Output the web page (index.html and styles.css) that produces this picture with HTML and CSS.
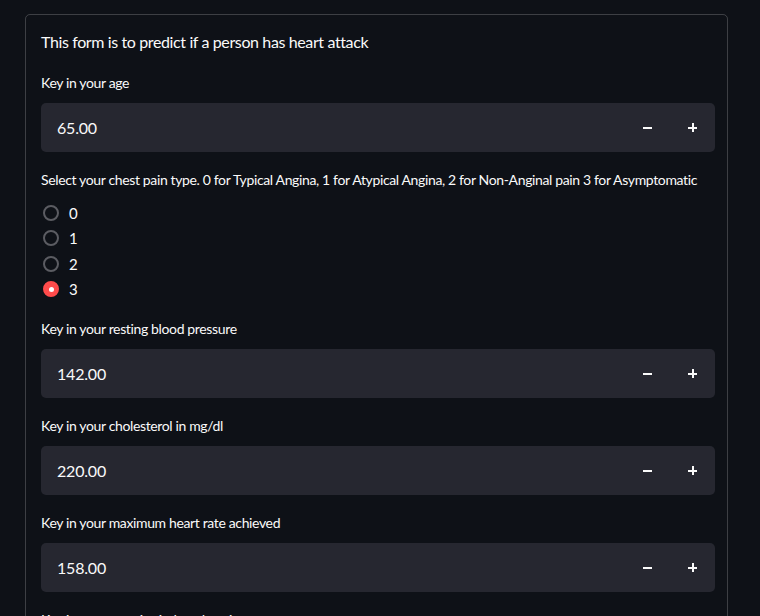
FILE: index.html
```html
<!DOCTYPE html>
<html>
<head>
<meta charset="utf-8">
<link rel="stylesheet" href="styles.css">
</head>
<body>
<div class="page">
  <form class="form">
    <p class="title">This form is to predict if a person has heart attack</p>

    <div class="field">
      <label class="label">Key in your age</label>
      <div class="num">
        <span class="num-value">65.00</span>
        <span class="step"><span class="minus"></span></span>
        <span class="step"><span class="plus"></span></span>
      </div>
    </div>

    <div class="field">
      <label class="label">Select your chest pain type. 0 for Typical Angina, 1 for Atypical Angina, 2 for Non-Anginal pain 3 for Asymptomatic</label>
      <div class="radios">
        <div class="radio"><span class="dot"></span><span>0</span></div>
        <div class="radio"><span class="dot"></span><span>1</span></div>
        <div class="radio"><span class="dot"></span><span>2</span></div>
        <div class="radio"><span class="dot on"></span><span>3</span></div>
      </div>
    </div>

    <div class="field">
      <label class="label">Key in your resting blood pressure</label>
      <div class="num">
        <span class="num-value">142.00</span>
        <span class="step"><span class="minus"></span></span>
        <span class="step"><span class="plus"></span></span>
      </div>
    </div>

    <div class="field">
      <label class="label">Key in your cholesterol in mg/dl</label>
      <div class="num">
        <span class="num-value">220.00</span>
        <span class="step"><span class="minus"></span></span>
        <span class="step"><span class="plus"></span></span>
      </div>
    </div>

    <div class="field">
      <label class="label">Key in your maximum heart rate achieved</label>
      <div class="num">
        <span class="num-value">158.00</span>
        <span class="step"><span class="minus"></span></span>
        <span class="step"><span class="plus"></span></span>
      </div>
    </div>

    <div class="field">
      <label class="label">Key in your exercise induced angina</label>
    </div>
  </form>
</div>
</body>
</html>
```

FILE: styles.css
```css
html, body {
  margin: 0;
  padding: 0;
  background: #0e1117;
  height: 100%;
  overflow: hidden;
}
body {
  font-family: Lato, "Open Sans", sans-serif;
  color: #fafafa;
}
.page {
  padding: 14px 32px 0 25px;
}
.form {
  border: 1px solid rgba(250, 250, 250, 0.2);
  border-radius: 5px;
  padding: 15px 12px 40px 15px;
  display: flex;
  flex-direction: column;
}
.title {
  margin: 0 0 19px 0;
  font-size: 16px;
  line-height: 24px;
  height: 24px;
  letter-spacing: -0.38px;
}
.field {
  display: flex;
  flex-direction: column;
  margin-bottom: 18px;
}
.label {
  font-size: 14px;
  line-height: 20px;
  margin-bottom: 10px;
  letter-spacing: -0.36px;
  white-space: nowrap;
}
.num {
  display: flex;
  align-items: center;
  height: 49px;
  background: #262730;
  border-radius: 5px;
}
.num-value {
  flex: 1;
  padding-left: 16px;
  font-size: 16px;
  letter-spacing: -0.2px;
}
.step {
  width: 45px;
  height: 49px;
  display: flex;
  align-items: center;
  justify-content: center;
}
.minus, .plus {
  display: block;
  width: 9px;
  height: 9px;
  position: relative;
}
.minus::before, .plus::before, .plus::after {
  content: "";
  position: absolute;
  background: #fafafa;
}
.minus::before, .plus::before {
  left: 0;
  top: 3.5px;
  width: 9px;
  height: 2.5px;
}
.plus::after {
  left: 3.5px;
  top: 0;
  width: 2.5px;
  height: 9px;
}
.radios {
  display: flex;
  flex-direction: column;
  margin-bottom: -1px;
}
.radio {
  display: flex;
  align-items: center;
  height: 25.5px;
  font-size: 15px;
}
.dot {
  box-sizing: border-box;
  width: 16px;
  height: 16px;
  border-radius: 50%;
  border: 2px solid #5b5c62;
  margin: 0 10px 0 2px;
  position: relative;
}
.dot.on {
  background: #ff4b4b;
  border-color: #ff4b4b;
}
.dot.on::after {
  content: "";
  position: absolute;
  left: 3.5px;
  top: 3.5px;
  width: 5px;
  height: 5px;
  border-radius: 50%;
  background: #fff;
}
```
